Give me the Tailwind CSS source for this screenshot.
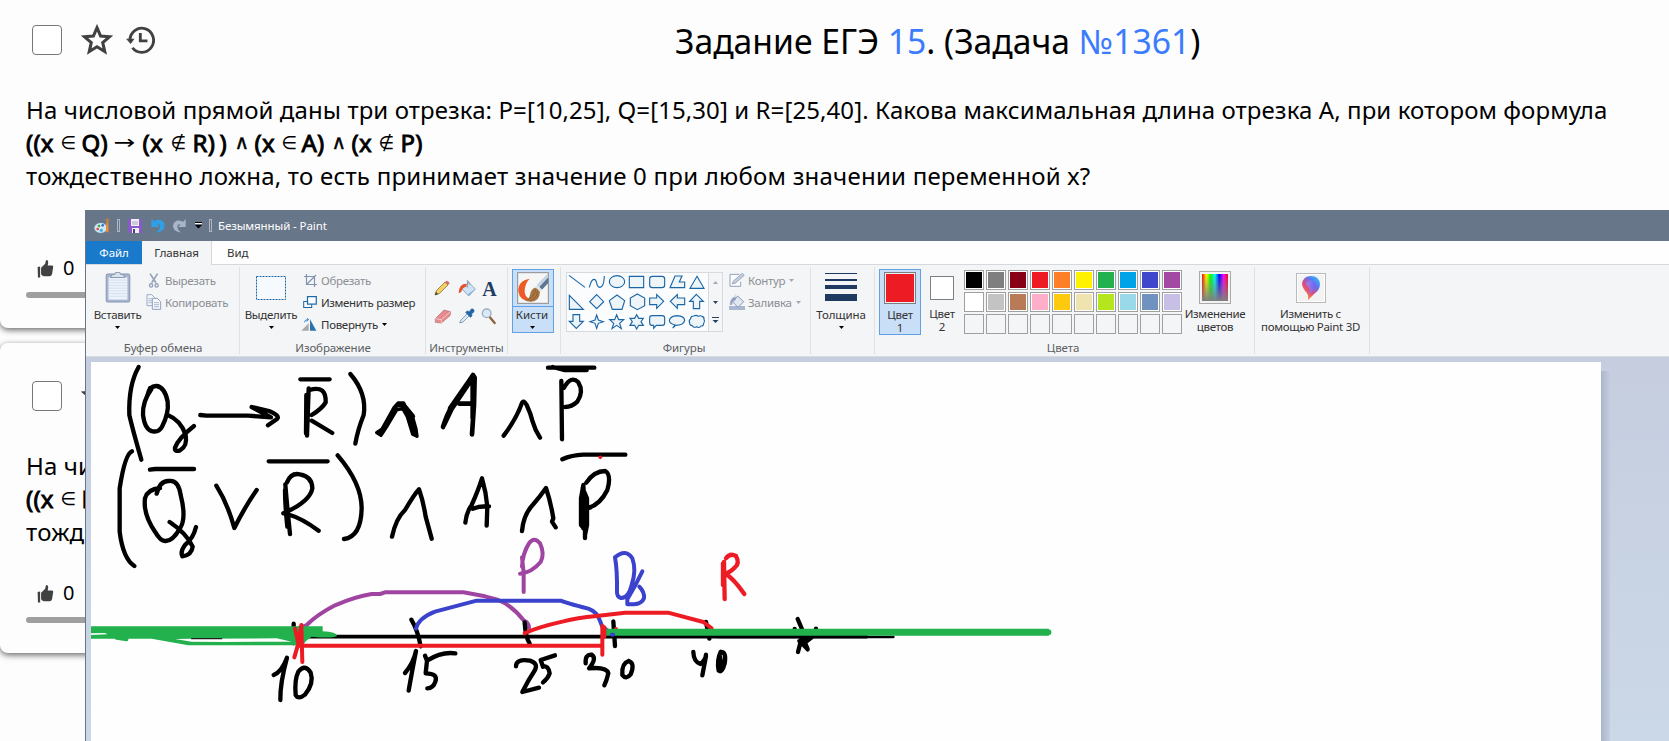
<!DOCTYPE html>
<html lang="ru">
<head>
<meta charset="utf-8">
<title>Задание ЕГЭ 15</title>
<script src="https://cdn.jsdelivr.net/npm/@tailwindcss/browser@4"></script>
</head>
<body class="relative h-[741px] w-[1669px] overflow-hidden bg-[#fdfdfd] font-['Noto_Sans','Open_Sans',sans-serif] text-black">

<!-- shared symbols -->
<svg class="hidden">
  <symbol id="star" viewBox="0 0 24 24"><path d="M12 2.800l2.700 6.200 6.700.6-5.100 4.400 1.500 6.600-5.800-3.500-5.800 3.500 1.500-6.600-5.100-4.400 6.700-.6z" fill="none" stroke="#414141" stroke-width="2.300"/></symbol>
  <symbol id="thumb" viewBox="0 0 54 56"><path d="M2 22l8-2v35H3zM13 24l13-13 2-9q2-4 6-1q3 3 0 16h14q5 1 3 7l-3 20q-2 7-8 7H22q-7-1-9-6z" fill="#414141"/></symbol>
  <symbol id="down" viewBox="0 0 7 4"><path d="M0 0h7L3.500 4z" fill="currentColor"/></symbol>
</svg>

<!-- question feed -->
<main class="flex flex-col">
  <section class="flex h-[328px] flex-col rounded-b-lg bg-[#fdfdfd] shadow-[0_2px_6px_rgba(0,0,0,0.6)]">
    <header class="flex h-[84px] items-start pl-8 pt-[25px]">
      <span class="h-[30px] w-[30px] rounded-[4px] border border-[#777] bg-white"></span>
      <svg class="ml-[19px] mt-[-1px] h-8 w-8"><use href="#star"/></svg>
      <svg class="ml-[13px] mt-[1px] h-[28px] w-[29px]" viewBox="355 80 81 81" preserveAspectRatio="none" fill="none" stroke="#414141"><path d="M366 120A33 35 0 1 1 373 143" stroke-width="8"/><path d="M395 100v23h20" stroke-width="8"/><path d="M355 117h24l-11 15z" fill="#414141" stroke="none"/></svg>
      <h1 class="ml-[520px] mt-[-6px] whitespace-nowrap text-[33.7px] leading-[44px]">Задание ЕГЭ <a class="text-[#3b7cff]">15</a>. (Задача <a class="text-[#3b7cff]">№1361</a>)</h1>
    </header>
    <div class="whitespace-nowrap pl-[26px] pt-[9px] text-[24px] leading-[33px]">
      <p class="tracking-[0.09px]">На числовой прямой даны три отрезка: P=[10,25], Q=[15,30] и R=[25,40]. Какова максимальная длина отрезка А, при котором формула</p>
      <p class="flex h-[33px] whitespace-pre [-webkit-text-stroke:0.9px_#000] tracking-[0.2px]"><span class="w-[34.5px]">((x </span><span class="w-[21px] font-['DejaVu_Sans'] text-[18px] [-webkit-text-stroke:0]">∈ </span><span class="w-[32px]">Q) </span><span class="w-[29px] font-['DejaVu_Sans'] text-[26px] [-webkit-text-stroke:0]"><span class="inline-block origin-left scale-y-75">→ </span></span><span class="w-[28px]">(x </span><span class="w-[22px] font-['DejaVu_Sans'] text-[18px] [-webkit-text-stroke:0]">∉ </span><span class="w-[27px]">R) </span><span class="w-[15px]">) </span><span class="w-[20px] font-['DejaVu_Sans'] text-[20px] [-webkit-text-stroke:0.4px]">∧ </span><span class="w-[27px]">(x </span><span class="w-[20px] font-['DejaVu_Sans'] text-[18px] [-webkit-text-stroke:0]">∈ </span><span class="w-[30px]">A) </span><span class="w-[20px] font-['DejaVu_Sans'] text-[20px] [-webkit-text-stroke:0.4px]">∧ </span><span class="w-[27px]">(x </span><span class="w-[22px] font-['DejaVu_Sans'] text-[18px] [-webkit-text-stroke:0]">∉ </span><span>P)</span></p>
      <p class="tracking-[0.23px]">тождественно ложна, то есть принимает значение 0 при любом значении переменной х?</p>
    </div>
    <div class="mt-auto flex h-[75px] flex-col">
      <div class="flex h-[39px] items-start pl-[37px]"><svg class="mt-[7px] h-[18px] w-[17px]"><use href="#thumb"/></svg><span class="ml-[9px] text-[20px] leading-[30px]">0</span></div>
      <div class="ml-[26px] h-[6px] rounded-full bg-[#9f9f9f]"></div>
    </div>
  </section>
  <section class="mt-[15px] flex h-[310px] flex-col rounded-lg bg-[#fdfdfd] shadow-[0_2px_6px_rgba(0,0,0,0.6)]">
    <header class="flex h-[97px] items-start pl-8 pt-[38px]">
      <span class="h-[30px] w-[30px] rounded-[4px] border border-[#777] bg-white"></span>
      <svg class="ml-[19px] mt-[-1px] h-8 w-8"><use href="#star"/></svg>
    </header>
    <div class="h-[109px] whitespace-nowrap pl-[26px] pt-[9px] text-[24px] leading-[33px]">
      <p class="tracking-[0.09px]">На числовой прямой</p>
      <p class="flex h-[33px] whitespace-pre [-webkit-text-stroke:0.9px_#000] tracking-[0.2px]"><span class="w-[34.5px]">((x </span><span class="w-[21px] font-['DejaVu_Sans'] text-[18px] [-webkit-text-stroke:0]">∈ </span><span>R)</span></p>
      <p class="tracking-[0.23px]">тождественно</p>
    </div>
    <div class="mt-auto flex h-[75px] flex-col">
      <div class="flex h-[39px] items-start pl-[37px]"><svg class="mt-[7px] h-[18px] w-[17px]"><use href="#thumb"/></svg><span class="ml-[9px] text-[20px] leading-[30px]">0</span></div>
      <div class="ml-[26px] h-[6px] rounded-full bg-[#9f9f9f]"></div>
    </div>
  </section>
</main>

<!-- Paint window -->
<div class="absolute left-[85px] top-[210px] flex h-[531px] w-[1584px] flex-col border-l border-[#687689] bg-[#c5cddf] text-[11.5px] tracking-[-0.3px] text-[#333]">
  <div class="flex h-[31px] shrink-0 items-center bg-[#687689] pl-[8px] text-white">
    <svg class="h-[16px] w-[16px]" viewBox="42 36 48 48"><ellipse cx="62" cy="66" rx="19" ry="15" fill="#cfe6f5" stroke="#83b8dc"/><circle cx="53" cy="69" r="4" fill="#e34b36"/><circle cx="57" cy="60" r="4" fill="#43a948"/><circle cx="68" cy="58" r="4" fill="#3471c4"/><circle cx="64" cy="73" r="5" fill="#48b0df"/><path d="M79 49h6l1 28q-4 4-8 0z" fill="#ec8b2f"/><path d="M75 40l9-3 4 4-2 8h-6z" fill="#bd7d44"/></svg>
    <span class="ml-[7px] h-[13px] w-[3px] border border-[#adb6c1]"></span>
    <svg class="ml-[8px] h-[14px] w-[14px]" viewBox="0 0 14 14"><path d="M0 0h13l1 1v13H1L0 13z" fill="#8959c7"/><path d="M3 0h8v7H3zM4 9h7v5H4z" fill="#f0eefa"/><path d="M4 3h6M4 5h6" stroke="#aaa"/><path d="M5 10h2v4H5z" fill="#504270"/></svg>
    <svg class="ml-[9px] h-[15px] w-[14px]" viewBox="211 42 40 43"><path d="M212 44v24h23l-7-8q10-1 9 7-1 8-13 17 24-2 26-20-1-17-19-17-7 0-11 5z" fill="#2f9fe8"/></svg>
    <svg class="ml-[8px] h-[14px] w-[13px]" viewBox="276 43 40 42"><path d="M315 43v24h-23l7-8q-10-1-10 7 1 8 11 18-22-2-24-19 1-18 19-18 7 0 11 5z" fill="#a9b5cb"/></svg>
    <svg class="ml-[9px] h-[7px] w-[7px] text-black" viewBox="0 0 7 7"><path d="M0 0h7v1H0zM0 3h7L3.500 6.500z"/><path d="M0 1h7v1H0z" fill="#fff"/></svg>
    <span class="ml-[7px] h-[13px] w-[3px] border border-[#adb6c1]"></span>
    <span class="ml-[6px] whitespace-nowrap tracking-[-0.1px]">Безымянный - Paint</span>
  </div>
  <nav class="flex h-[24px] shrink-0 border-b border-[#d5d8dc] bg-[#fefefe]">
    <span class="flex w-[56px] items-center justify-center bg-[#1979ca] tracking-[-0.1px] text-white">Файл</span>
    <span class="mb-[-1px] flex w-[70px] items-center justify-center border-r border-[#d5d8dc] bg-[#f4f5f7] tracking-[-0.1px]">Главная</span>
    <span class="flex items-center pl-[15px] tracking-normal">Вид</span>
  </nav>

  <!-- ribbon -->
  <div class="flex h-[92px] shrink-0 whitespace-nowrap border-b border-[#d9dbde] bg-[#f4f5f7] pb-[2px] pt-[2px] leading-[13px]">
    <div class="flex w-[154px] flex-col border-r border-[#dfe1e4]">
      <div class="flex h-[71px]">
        <div class="flex w-[60px] flex-col items-center pl-[2px] pt-[5px]">
          <svg class="ml-[2px] h-[31px] w-[26px]" viewBox="74 201 76 92"><rect x="77" y="207" width="70" height="83" rx="5" fill="#a7b6d0" stroke="#8796b5" stroke-width="3"/><path d="M84 217h56v66H84z" fill="#edf3fb"/><path d="M84 225h56M84 233h56M84 241h56M84 249h56M84 257h56M84 265h56M84 273h56" stroke="#c6d7ec" stroke-width="2"/><path d="M90 217q2-9 12-9 1-6 9-6t9 6q11 0 12 9z" fill="#dbe3ee" stroke="#8c9ab3" stroke-width="3"/></svg>
          <span class="mt-[5px] ml-[1px]">Вставить</span>
          <svg class="mt-[5px] h-[3px] w-[5px] text-black"><use href="#down"/></svg>
        </div>
        <div class="flex flex-col pt-[5px] text-[#8b8f95]">
          <div class="flex h-[16px] items-center"><svg class="ml-[2px] h-[15px] w-[12px]" viewBox="203 200 36 46"><path d="M209 202l18 28M232 202l-18 28" stroke="#93a1ba" stroke-width="5" fill="none"/><circle cx="212" cy="238" r="5" stroke="#93a1ba" stroke-width="4" fill="none"/><circle cx="229" cy="238" r="5" stroke="#93a1ba" stroke-width="4" fill="none"/></svg><span class="ml-[5px]">Вырезать</span></div>
          <div class="mt-[6px] flex h-[16px] items-center"><svg class="h-[16px] w-[16px]" viewBox="197 267 48 48"><path d="M200 269h14l9 9v24h-23z" fill="#f4f7fc" stroke="#9aa9c3" stroke-width="3"/><path d="M204 281h14M204 287h14M204 293h14" stroke="#aabbd4" stroke-width="3"/><path d="M216 280h15l10 10v23h-25z" fill="#f4f7fc" stroke="#8fa0bc" stroke-width="3"/><path d="M221 293h15M221 299h15M221 305h15" stroke="#aabbd4" stroke-width="3"/></svg><span class="ml-[3px]">Копировать</span></div>
        </div>
      </div>
      <span class="pl-[1px] pt-[3px] text-center tracking-[-0.1px] text-[#5c5f64]">Буфер обмена</span>
    </div>

    <div class="flex w-[186px] flex-col border-r border-[#dfe1e4]">
      <div class="flex h-[71px]">
        <div class="flex w-[62px] flex-col items-center pt-[9px]">
          <svg class="h-[25px] w-[31px]" viewBox="0 0 31 25"><rect x=".5" y=".5" width="29" height="23" fill="#f6fafe" stroke="#1b66a4" stroke-dasharray="2 1"/></svg>
          <span class="mt-[7px]">Выделить</span>
          <svg class="mt-[5px] h-[3px] w-[5px] text-black"><use href="#down"/></svg>
        </div>
        <div class="flex flex-col pt-[5px]">
          <div class="flex h-[16px] items-center text-[#8b8f95]"><svg class="ml-[2px] h-[13px] w-[13px]" viewBox="0 0 13 13" fill="none" stroke="#8193b0"><path d="M2.500 0v10.500H13M0 2.500h10.500V13M3 10L12 1" stroke-width="1.200"/></svg><span class="ml-[4px]">Обрезать</span></div>
          <div class="mt-[6px] flex h-[16px] items-center"><svg class="ml-[1px] h-[12px] w-[14px]" viewBox="0 0 14 12" fill="#f8fcff" stroke="#1b66a4"><rect x=".7" y="5.500" width="8" height="6"/><rect x="4.500" y=".6" width="8.800" height="7.500" stroke-width="1.200"/></svg><span class="ml-[4px] tracking-[-0.35px]">Изменить размер</span></div>
          <div class="mt-[6px] flex h-[16px] items-center"><svg class="ml-[-1px] h-[13px] w-[16px]" viewBox="667 337 48 39"><path d="M668 375h22v-22z" fill="#a9a9a9"/><path d="M694 375V341l19 34z" fill="#2872ae"/><path d="M677 350q1-8 11-8M684 337l6 5-6 5" fill="none" stroke="#2f86d8" stroke-width="3"/></svg><span class="ml-[4px]">Повернуть</span><svg class="ml-[4px] h-[3px] w-[5px] text-black"><use href="#down"/></svg></div>
        </div>
      </div>
      <span class="pl-[1px] pt-[3px] text-center tracking-[-0.1px] text-[#5c5f64]">Изображение</span>
    </div>

    <div class="flex w-[82px] flex-col border-r border-[#dfe1e4]">
      <div class="grid h-[71px] grid-cols-3 content-start gap-y-[9px] pl-[8px] pr-[2px] pt-[13px]">
        <svg class="h-[17px] w-[18px]" viewBox="42 227 54 51"><path d="M45 272l4-13 26-26 9 9-26 26z" fill="#f4cf62" stroke="#6d5a2c" stroke-width="2"/><path d="M75 233l5-4q6 1 9 8l-5 5z" fill="#d66a72"/><path d="M45 272l3-9 6 6z" fill="#333"/></svg>
        <svg class="h-[17px] w-[18px]" viewBox="112 225 54 51"><path d="M124 252l20-20 20 20-20 21z" fill="#cfe1f4" stroke="#7e9bbd" stroke-width="2.500"/><path d="M142 268l21-15-19 19z" fill="#7eabd8"/><path d="M140 226v22M140 227q6 0 6 12" stroke="#6d7886" stroke-width="2" fill="none"/><path d="M137 236q-22 0-23 28 5 0 8-4 3-13 15-15z" fill="#e8502c"/></svg>
        <span class="pl-px font-['Liberation_Serif',serif] text-[20px] font-bold leading-[19px] text-[#1f3c64]">A</span>
        <svg class="h-[17px] w-[18px]" viewBox="42 310 54 51"><path d="M46 342l26-26 20 5-2 12-26 22-18-2z" fill="#e58b8e" stroke="#b96b70" stroke-width="2"/><path d="M46 342l18 3 28-24M64 345v10" fill="none" stroke="#f5c5c5" stroke-width="3"/></svg>
        <svg class="h-[17px] w-[18px]" viewBox="114 310 54 51"><path d="M119 355l4-9 20-20 6 6-20 20z" fill="#dcecf9" stroke="#5a7494" stroke-width="2"/><path d="M137 323l5-4 6 2 6-8q6-2 8 4t-7 10l1 7-5 4z" fill="#2365a6" stroke="#2365a6" stroke-width="2"/></svg>
        <svg class="h-[17px] w-[18px]" viewBox="184 310 54 51"><path d="M210 337l15 18" stroke="#8d6239" stroke-width="7" stroke-linecap="round"/><circle cx="201" cy="326" r="13" fill="#d8eafa" stroke="#a0adba" stroke-width="4"/></svg>
      </div>
      <span class="pt-[3px] text-center tracking-[-0.1px] text-[#5c5f64]">Инструменты</span>
    </div>

    <div class="flex w-[53px] flex-col border-r border-[#dfe1e4] pl-[4px] pt-[2px]">
      <div class="flex h-[64px] w-[42px] flex-col items-center border border-[#62a2e4] bg-[#c9dff7]">
        <div class="flex h-[37px] w-full justify-center border-b border-[#62a2e4] pt-[2px]">
          <svg class="h-[32px] w-[32px]" viewBox="291 201 96 96"><rect x="293" y="203" width="92" height="92" fill="#f5f7f7" stroke="#8e8e8e" stroke-width="3"/><path d="M329 221q-36 6-34 38 4 32 44 29-24-9-25-28 0-25 15-39z" fill="#ee5a24"/><path d="M385 206l-33 34 14 14 19-20z" fill="#5e7693"/><path d="M385 206l-33 34 6 6 27-29z" fill="#c7d6e6"/><path d="M352 240l14 14-6 8-16-14z" fill="#dfe3e6"/><path d="M344 248q10 2 16 14-2 30-30 28-13-1-17-5 15-2 17-16 3-17 14-21z" fill="#a97643"/><path d="M322 285q20-9 25-32M331 287q20-6 22-28" stroke="#805128" stroke-width="2" fill="none"/></svg>
        </div>
        <span class="ml-[-2px] mt-[1px] tracking-normal">Кисти</span>
        <svg class="ml-[-1px] mt-[5px] h-[3px] w-[5px] text-black"><use href="#down"/></svg>
      </div>
    </div>

    <div class="flex w-[250px] flex-col border-r border-[#dfe1e4]">
      <div class="flex h-[71px] pl-[5px] pt-[5px]">
        <div class="flex h-[60px] w-[157px] border border-[#d6dadf] bg-[#fbfcfe]">
          <svg class="h-[58px] w-[141px]" viewBox="441 204 423 174" fill="#edf5f8" stroke="#1b66a4" stroke-width="3.400">
            <path d="M447 211l48 36" /><path d="M508 247q6-24 14-24 6 0 8 12 3 12 10 12 12-2 13-34" fill="none"/><ellipse cx="591" cy="230" rx="23" ry="18"/><path d="M628 214h43v34h-43z"/><rect x="689" y="214" width="45" height="34" rx="8"/><path d="M765 213h21l-8 18h16v17h-44z"/><path d="M831 214l21 36h-42z"/>
            <path d="M448 271v42h42z"/><path d="M530 269l21 21-21 21-21-21z"/><path d="M591 270l23 17-8 26h-29l-9-26z"/><path d="M652 267l22 12v23l-22 12-21-12v-23z"/><path d="M689 279h21v-10l21 20-21 21v-11h-21z"/><path d="M794 279h-22v-10l-21 20 21 21v-11h22z"/><path d="M829 268l21 21h-11v22h-19v-22h-11z"/>
            <path d="M459 329h20v20h11l-21 21-21-21h11z"/><path d="M530 330l5 15 15 5-15 5-5 15-5-15-15-5 15-5z"/><path d="M590 329l6 15h15l-12 11 5 16-14-10-14 10 5-16-12-11h15z"/><path d="M650 329l6 11h14l-7 10 7 11h-14l-6 11-6-11h-14l7-11-7-10h14z"/><path d="M696 332h31q7 0 7 7v15q0 7-7 7h-18l-8 9v-9h-5q-7 0-7-7v-15q0-7 7-7z"/><path d="M765 360q-17-4-17-14 3-13 23-14 22 1 23 14-3 15-27 15l-9 8z"/><path d="M812 341q0-8 9-8 8-4 14 1 7-4 12 1 6 1 5 8 4 6-1 12 0 9-8 8-6 8-13 2-9 5-13-3-9-1-8-9-4-6 3-12z"/>
          </svg>
          <div class="flex w-[14px] flex-col items-center border-l border-[#d6dadf] bg-[#f4f5f7]">
            <svg class="mt-[8px] h-[3px] w-[5px] rotate-180 text-[#a0a8b8]"><use href="#down"/></svg>
            <svg class="mt-[17px] h-[3px] w-[5px] text-[#27415f]"><use href="#down"/></svg>
            <svg class="mt-[13px] h-[7px] w-[7px] text-[#27415f]" viewBox="0 0 7 7" fill="#27415f"><path d="M0 0h7v1H0zM.500 3h6L3.500 6z"/></svg>
          </div>
        </div>
        <div class="ml-[6px] flex flex-col text-[#8b8f95]">
          <div class="flex h-[16px] items-center"><svg class="h-[14px] w-[16px]" viewBox="927 207 48 42"><path d="M958 211h-28v36h32v-14" fill="#fafbfd" stroke="#93a1ba" stroke-width="3"/><path d="M937 240l3-9 27-23 6 6-26 23z" fill="#c2cddd" stroke="#7f8fa9" stroke-width="2"/></svg><span class="ml-[3px]">Контур</span><svg class="ml-[4px] h-[3px] w-[5px] text-[#a5a8ac]"><use href="#down"/></svg></div>
          <div class="mt-[6px] flex h-[16px] items-center"><svg class="h-[16px] w-[16px]" viewBox="927 267 48 48"><path d="M927 303h48v12h-48z" fill="#a9b7d0"/><path d="M938 291l15-18 18 17-17 17z" fill="#dfe7f1" stroke="#8897b1" stroke-width="3"/><path d="M946 267v20M946 276q-14 0-16 23h6q0-13 10-15z" fill="#8fa1bf" stroke="#8fa1bf"/></svg><span class="ml-[3px]">Заливка</span><svg class="ml-[4px] h-[3px] w-[5px] text-[#a5a8ac]"><use href="#down"/></svg></div>
        </div>
      </div>
      <span class="pr-[3px] pt-[3px] text-center tracking-[-0.1px] text-[#5c5f64]">Фигуры</span>
    </div>

    <div class="flex w-[64px] flex-col items-center border-r border-[#dfe1e4] pr-[3px] pt-[6px]">
      <div class="flex h-[28px] w-[32px] flex-col justify-between">
        <span class="h-px bg-[#1f3a60]"></span><span class="h-[2px] bg-[#1f3a60]"></span><span class="h-[4px] bg-[#1f3a60]"></span><span class="h-[7px] bg-[#1f3a60]"></span>
      </div>
      <span class="mt-[7px] tracking-[-0.1px]">Толщина</span>
      <svg class="mt-[5px] h-[3px] w-[5px] text-black"><use href="#down"/></svg>
    </div>

    <div class="flex w-[380px] flex-col border-r border-[#dfe1e4]">
      <div class="flex h-[71px] pt-[2px]">
        <div class="ml-[4px] flex h-[66px] w-[42px] flex-col items-center border border-[#62a2e4] bg-[#c9dff7] pt-[2px] text-center">
          <span class="h-[32px] w-[32px] border border-[#7f7f7f] bg-[#ed1c24] outline-1 -outline-offset-2 outline-[#e8f0f8]"></span>
          <span class="mt-[4px]">Цвет<br>1</span>
        </div>
        <div class="ml-[8px] flex w-[26px] flex-col items-center pt-[7px] text-center">
          <span class="h-[24px] w-[24px] border border-[#7f7f7f] bg-white"></span>
          <span class="mt-[7px]">Цвет<br>2</span>
        </div>
        <div id="palette" class="ml-[9px] mt-[1px] grid h-[64px] w-[218px] grid-cols-10 gap-[2px]"></div>
        <div class="ml-[3px] flex w-[60px] flex-col items-center pt-[3px] text-center">
          <span class="h-[31px] w-[30px] border-2 border-[#f2f2f2] bg-[linear-gradient(to_top,#808080,transparent),linear-gradient(to_right,red,yellow,lime,cyan,blue,magenta,red)] shadow-[0_0_0_1px_#aaa]"></span>
          <span class="mt-[4px]">Изменение<br>цветов</span>
        </div>
      </div>
      <span class="pr-[3px] pt-[3px] text-center tracking-[-0.1px] text-[#5c5f64]">Цвета</span>
    </div>

    <div class="flex w-[115px] flex-col items-center border-r border-[#dfe1e4] pt-[6px] text-center">
      <svg class="ml-[-2px] h-[30px] w-[30px]" viewBox="0 0 30 30"><defs><linearGradient id="b" x1="1" y1="0" x2="0.2" y2="1"><stop offset="0" stop-color="#18d6f4"/><stop offset=".35" stop-color="#5d74f5"/><stop offset=".65" stop-color="#e2487c"/><stop offset="1" stop-color="#f6a81c"/></linearGradient><linearGradient id="l"><stop offset="0" stop-color="#a08cf8"/><stop offset="1" stop-color="#6a5ff0"/></linearGradient></defs><rect x=".5" y=".5" width="29" height="29" fill="#f3f3f3" stroke="#bbb"/><rect x="1.500" y="1.500" width="27" height="27" fill="none" stroke="#fff"/><path d="M15 3q8 0 9 8 0 6-6 10l-6 6q1-6-3-9-3-4-3-7 1-8 9-8z" fill="url(#b)"/><path d="M15 7q5 1 5 6-1 5-7 8 2-6-3-9 0-4 5-5z" fill="url(#l)" opacity=".7"/></svg>
      <span class="ml-[-3px] mt-[4px]">Изменить с<br>помощью Paint 3D</span>
    </div>
  </div>

  <!-- canvas -->
  <div class="flex grow bg-linear-to-b from-[#c5cddf] to-[#cbd8e8] pl-[5px] pt-[5px]">
    <svg class="h-[379px] w-[1510px] shrink-0 bg-[#fefefe]" viewBox="91 362 1510 379" fill="none" stroke-linecap="round" stroke-linejoin="round">
      <g transform="translate(85 355) scale(.33333)" stroke="#000" stroke-width="13">
        <path d="M161 36Q130 90 133 180Q142 220 169 314"/>
        <path d="M199 103Q172 140 174 180Q180 226 203 229Q222 232 231 215Q252 175 248 140Q240 97 215 93Q193 92 187 122M195 100L187 122M248 180Q288 196 302 240Q308 274 285 286Q268 292 270 278Q280 250 327 213"/>
        <path d="M346 180L364 182H490L558 187L500 156L552 168Q586 182 576 192L549 211"/>
        <path d="M646 73H734M671 100L666 242M664 120L663 235M674 105Q724 90 722 142Q712 160 680 180M680 197L742 234M796 57Q846 115 836 180Q818 225 811 266"/>
        <path d="M141 289Q120 296 104 400V530Q114 610 148 633M195 344L210 342H327"/>
        <path d="M215 416Q225 376 252 378Q280 374 287 420Q305 490 285 520Q262 560 240 558Q226 558 210 530Q174 478 180 430Q188 402 225 399M254 501Q305 535 323 575Q320 600 292 604Q285 590 300 570Q325 550 333 516"/>
        <path d="M394 392Q428 446 448 519Q480 455 515 405M551 319H728"/>
        <path d="M601 388Q605 440 615 537M600 405Q600 450 607 515M606 382Q618 352 645 358Q682 365 682 400Q675 440 595 475M615 480Q650 490 701 527M758 301Q830 385 830 460Q828 545 777 552"/>
      </g>
      <g transform="translate(370 355) scale(.33333)" stroke="#000" stroke-width="13">
        <path d="M20 233L33 241L50 215L80 165L98 160L112 185L128 238L141 244L138 222L126 180L105 155L101 144L84 144L72 158L36 222z" stroke-width="10" fill="none"/>
        <path d="M84 150H101L118 185L135 232M76 162L35 232M104 155L128 184M122 190L131 225" stroke-width="15"/>
        <path d="M219 216Q230 180 246 154L309 60L314 68L312 150L306 238M222 210L246 160L300 80M240 160L290 88M268 146H304M308 70V190" stroke-width="14"/>
        <path d="M401 242Q440 190 455 146Q460 132 470 150Q482 175 488 200Q495 225 510 248"/>
        <path d="M534 38H673M548 36L582 45H650M574 78L576 253M582 98Q603 60 625 82Q642 110 622 140Q605 156 586 156"/>
        <path d="M66 545Q78 490 105 465Q135 415 147 403Q160 440 167 485L185 551M286 503Q290 470 305 450Q325 405 336 370Q348 410 352 455L350 512M308 461Q330 452 357 454"/>
        <path d="M456 528Q460 480 488 450Q510 425 528 399Q542 440 550 490L546 500L557 517M577 313Q605 300 640 299H766"/>
        <path d="M645 549V480L640 390L633 430V510L645 525M638 400L651 430V510L645 540M649 383Q672 348 706 348Q725 360 712 405Q690 450 652 460M640 400V520"/>
        <path d="M691 307v.1" stroke="#ed1c24" stroke-width="11"/>
      </g>
      <g transform="translate(85 530) scale(.33333)" stroke="#000" stroke-width="13">
        <path d="M320 320H2345" stroke-width="11"/><path d="M1900 321H2425" stroke-width="8"/>
        <path d="M626 281V340M979 269Q998 300 1007 349M566 435Q590 425 606 383Q585 460 586 510M640 425Q660 400 677 428Q688 460 660 494Q640 510 632 495Q628 450 640 425"/>
        <path d="M960 429Q985 400 993 363Q980 430 971 482M1020 377L1026 392Q1070 364 1111 370M1026 392L1022 430Q1060 430 1051 455Q1045 475 1027 475"/>
        <g stroke="#9f45a1"><path d="M640 295L665 285Q695 255 750 226Q810 200 860 192L885 192L900 187H1135L1200 199L1240 210Q1280 226 1317 272Q1332 278 1332 294" stroke-width="12"/></g>
        <path d="M993 296Q1000 265 1050 245L1175 212H1427Q1440 218 1510 236Q1535 245 1544 270L1552 290L1585 315" stroke="#3b43cc" stroke-width="12"/>
      </g>
      <g transform="translate(490 530) scale(.33333)" stroke="#000" stroke-width="13">
        <path d="M104 277Q106 320 119 340M370 274L375 348M648 276L658 326"/>
        <path d="M78 409Q78 385 120 392Q145 400 135 420Q115 450 97 486L147 473M195 376L152 390L159 410Q175 405 179 430Q174 445 159 457"/>
        <path d="M287 400Q285 372 305 374Q322 385 297 415Q350 410 355 430Q350 452 343 466M416 393Q394 400 397 435Q408 450 422 433Q436 400 416 393"/>
        <path d="M610 366Q611 395 631 402Q647 390 648 374M648 378L637 436M692 366Q680 390 686 422Q696 430 704 400Q710 365 692 366M690 380L696 410"/>
        <path d="M923 267L937 300M924 366L932 335L953 358L945 338L965 322L928 333M932 330L945 345M914 297v.1M978 296v.1"/>
        <path d="M104 310Q140 292 220 274Q260 264 320 258L405 248H534L640 276L665 295M378 297v.1" stroke="#ed1c24" stroke-width="12"/>
        <path d="M101 186V128L96 82M90 131Q125 128 152 96Q165 72 150 40Q132 18 117 40Q98 70 96 110" stroke="#9f45a1" stroke-width="12"/>
        <path d="M375 82Q407 55 427 85Q440 120 425 165Q415 205 393 204Q380 200 381 185Q382 120 375 82M457 124Q435 170 412 208V223H432Q455 222 462 205Q464 185 448 170" stroke="#3b43cc" stroke-width="12"/>
        <path d="M702 96L704 207M699 100V165M708 85Q720 68 738 78Q750 100 735 112Q720 128 706 131Q730 145 763 192" stroke="#ed1c24" stroke-width="13"/>
        <path d="M345 307H1676" stroke="#22b14c" stroke-width="21" stroke-linecap="butt"/>
        <path d="M1670 307h5" stroke="#22b14c" stroke-width="18"/>
        <path d="M365 314h5" stroke="#3b43cc" stroke-width="11"/>
      </g>
      <g transform="translate(85 530) scale(.33333)" stroke="#22b14c" stroke-width="11">
        <path d="M0 289H713V304Q755 306 756 318Q740 326 680 320L662 334 655 345 640 346H310L200 326H0z" fill="#22b14c" stroke="none"/>
        <path d="M270 327L320 326 575 325 620 335 420 336 320 335z" fill="#fefefe" stroke="none"/>
        <path d="M18 310L60 309 67 313 18 315z" fill="#fefefe" stroke="none"/>
        <path d="M320 326h90" stroke="#222" stroke-width="4"/>
        <path d="M95 324L125 328"/>
        <g stroke="#ed1c24" stroke-width="12"><path d="M640 347H1550"/><path d="M630 296L640 340L628 382M649 285L640 340M649 285L652 396M1552 288V374M1558 292V320"/></g>
      </g>
    </svg>
    <div class="mt-[9px] h-[370px] w-[9px] bg-linear-to-r from-[#a9b6ca] to-[#c5cddf]"></div>
  </div>
</div>

<script>
  const colors = ['#000','#7f7f7f','#880015','#ed1c24','#ff7f27','#fff200','#22b14c','#00a2e8','#3f48cc','#a349a4',
    '#fff','#c3c3c3','#b97a57','#ffaec9','#ffc90e','#efe4b0','#b5e61d','#99d9ea','#7092be','#c8bfe7'];
  const palette = document.getElementById('palette');
  for (let i = 0; i < 30; i++) {
    const cell = document.createElement('span');
    cell.className = 'h-[20px] w-[20px] border border-[#a0a0a0] p-px';
    if (colors[i]) {
      cell.classList.add('bg-white');
      const fill = document.createElement('span');
      fill.className = 'block h-full w-full';
      fill.style.background = colors[i];
      cell.append(fill);
    }
    palette.append(cell);
  }
</script>
</body>
</html>
